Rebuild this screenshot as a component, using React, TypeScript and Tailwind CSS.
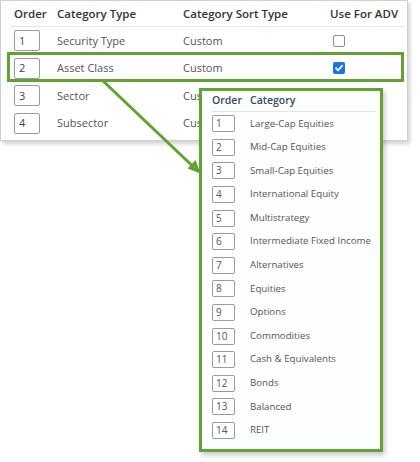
import React from "react";

const GREEN = "#62a133";

const topRows = [
  { n: "1", t: "Security Type", s: "Custom", adv: false },
  { n: "2", t: "Asset Class", s: "Custom", adv: true },
  { n: "3", t: "Sector", s: "Custom", adv: null },
  { n: "4", t: "Subsector", s: "Custom", adv: null },
];

const cats = [
  "Large-Cap Equities",
  "Mid-Cap Equities",
  "Small-Cap Equities",
  "International Equity",
  "Multistrategy",
  "Intermediate Fixed Income",
  "Alternatives",
  "Equities",
  "Options",
  "Commodities",
  "Cash & Equivalents",
  "Bonds",
  "Balanced",
  "REIT",
];

function Checkbox({ checked }: { checked: boolean }) {
  if (checked) {
    return (
      <div className="w-[12px] h-[12px] rounded-[2px] bg-[#1a73e8] flex items-center justify-center">
        <svg width="10" height="10" viewBox="0 0 10 10">
          <path d="M2 5.2 L4.1 7.3 L8 2.8" stroke="white" strokeWidth="1.8" fill="none" strokeLinecap="round" strokeLinejoin="round" />
        </svg>
      </div>
    );
  }
  return <div className="w-[12px] h-[12px] rounded-[2px] border border-[#8a8a8a] bg-white" />;
}

export default function App() {
  return (
    <div
      className="relative w-[420px] h-[462px] bg-white overflow-hidden"
      style={{ fontFamily: '"Open Sans", "Noto Sans", sans-serif' }}
    >
      {/* Top panel */}
      <div className="w-[408px] h-[141px] border border-[#cfcfcf] bg-white shadow-[2px_3px_4px_rgba(0,0,0,0.18)] pl-[10px] pr-[3px]">
        <div className="h-[26px] border-b border-[#e6e6e6] flex items-center text-[11.5px] font-semibold text-[#333] whitespace-nowrap">
          <div className="w-[46px] shrink-0 pl-[3px]">Order</div>
          <div className="w-[126px] shrink-0">Category Type</div>
          <div className="w-[147px] shrink-0">Category Sort Type</div>
          <div>Use For ADV</div>
        </div>
        {topRows.map((r) => (
          <div key={r.n} className="h-[27.5px] flex items-center text-[11px] text-[#555] whitespace-nowrap">
            <div className="w-[46px] shrink-0 pl-[3px]">
              <div className="w-[26px] h-[21px] border border-[#9a9a9a] rounded-[2px] pl-[4px] flex items-center text-[11px] text-[#444] bg-white">
                {r.n}
              </div>
            </div>
            <div className="w-[126px] shrink-0">{r.t}</div>
            <div className="w-[150px] shrink-0">{r.s}</div>
            <div>{r.adv !== null && <Checkbox checked={r.adv} />}</div>
          </div>
        ))}
      </div>

      {/* Highlight row */}
      <div className="absolute left-[7px] top-[52px] w-[397px] h-[30px] border-[3px] border-[#62a133]" />

      {/* Arrow */}
      <svg className="absolute left-0 top-0" width="420" height="462" viewBox="0 0 420 462">
        <line x1="102" y1="80" x2="192" y2="165.5" stroke={GREEN} strokeWidth="3" />
        <polygon points="200.5,173.5 187.5,168.5 195.5,160" fill={GREEN} />
      </svg>

      {/* Popup */}
      <div className="absolute left-[199px] top-[88px] w-[184px] h-[364px] border-[3px] border-[#62a133] bg-[#fdfefe] shadow-[2px_3px_5px_rgba(0,0,0,0.22)] pl-[10px] pr-[5px]">
        <div className="h-[21px] border-b border-[#e3e3e3] flex items-center text-[10.5px] font-semibold text-[#34495e] whitespace-nowrap">
          <div className="w-[38px] shrink-0">Order</div>
          <div>Category</div>
        </div>
        {cats.map((c, i) => (
          <div key={c} className="h-[23.6px] flex items-center text-[9.7px] text-[#555] whitespace-nowrap">
            <div className="w-[38px] shrink-0">
              <div className="w-[23px] h-[17px] border border-[#9a9a9a] rounded-[2px] pl-[3px] flex items-center text-[10px] text-[#555] bg-white">
                {i + 1}
              </div>
            </div>
            <div>{c}</div>
          </div>
        ))}
      </div>
    </div>
  );
}
